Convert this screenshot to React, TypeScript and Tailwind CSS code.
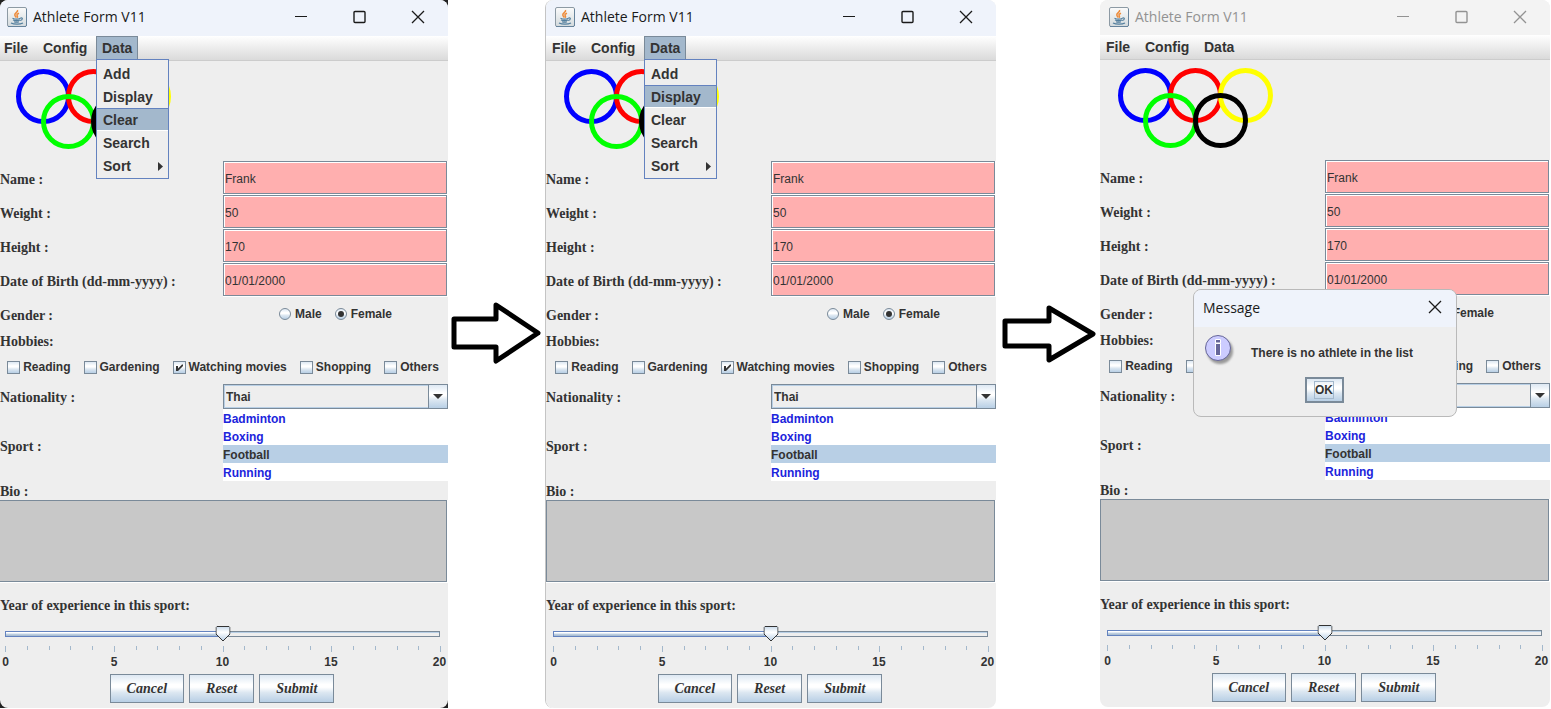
import { useId, useState, type ReactNode } from 'react';

const SANS = "font-['Liberation_Sans',Arial,sans-serif]";
const SERIF = "font-['Liberation_Serif','Times_New_Roman',serif]";
const LABEL = `${SERIF} text-[14px] leading-4 font-bold group-data-[edge=true]/form:pl-[2px]`;
const METAL = 'bg-[linear-gradient(#dde8f3,#ffffff_35%,#ffffff_45%,#dce7f1_65%,#b8cfe5)]';

function JavaIcon() {
  return (
    <svg width="20" height="20" viewBox="0 0 20 20" aria-hidden="true">
      <defs>
        <linearGradient id="cup-tile" x1="0" y1="0" x2="0" y2="1">
          <stop offset="0" stopColor="#fbfbfb" />
          <stop offset="1" stopColor="#d3dadd" />
        </linearGradient>
      </defs>
      <rect x="0.5" y="0.5" width="19" height="19" rx="1.5" fill="url(#cup-tile)" stroke="#8d9aa4" />
      <path d="M1 19.500h18M19.500 2v17" stroke="#66839c" />
      <path d="M10.500 3c1 2-3 3-2.700 5 .1 1 1 1.500 1.200 2.500M12 6.200c-2 .8-2.500 1.500-1.700 2.600.5.8.3 1.300-.3 1.900" fill="none" stroke="#ee8b3a" strokeWidth="1.500" />
      <path d="M5.500 11.200c2 .9 6 .9 8 0M6 13c2 .8 5 .8 7 0M7 14.700c1.500.6 3.500.6 5 0M13.500 11c2.500-.6 2.500 2-.3 2.500M4 16c3 1.600 9 1.600 12 0" fill="none" stroke="#537f9e" strokeWidth="1.200" />
    </svg>
  );
}

function CloseIcon() {
  return (
    <svg width="14" height="14" viewBox="0 0 14 14" stroke="currentColor" strokeWidth="1.300" aria-hidden="true">
      <path d="M1 1l12 12M13 1L1 13" />
    </svg>
  );
}

function TitleBar({ inactive }: { inactive: boolean }) {
  return (
    <header
      className={`flex items-center justify-between pl-[9px] pr-[23px] ${inactive ? 'h-[35px] bg-[#f3f3f3] text-[#929292]' : 'h-9 bg-[#eff3fb] text-[#1a1a1a]'}`}
    >
      <div className="flex items-center gap-[6px] pb-[2px]">
        <JavaIcon />
        <h1 className="font-['Open_Sans',sans-serif] text-[14px] leading-5">Athlete Form V11</h1>
      </div>
      <div className="flex items-center gap-[45px] pb-[2px]">
        <button type="button" aria-label="Minimize">
          <svg width="13" height="14" viewBox="0 0 13 14" stroke="currentColor" aria-hidden="true">
            <path d="M0 6.500h12" />
          </svg>
        </button>
        <button type="button" aria-label="Maximize">
          <svg width="13" height="14" viewBox="0 0 13 14" fill="none" stroke="currentColor" strokeWidth="1.400" aria-hidden="true">
            <rect x="1" y="1.500" width="11" height="11" rx="1" />
          </svg>
        </button>
        <button type="button" aria-label="Close">
          <CloseIcon />
        </button>
      </div>
    </header>
  );
}

const MENU_ITEMS = ['Add', 'Display', 'Clear', 'Search', 'Sort'];

function MenuBar({ highlighted }: { highlighted?: string }) {
  const open = highlighted !== undefined;
  return (
    <nav className="flex h-[25px] items-stretch border-b border-[#cccccc] bg-[linear-gradient(#ffffff,#dadada)] text-[14px] leading-[23px] font-bold text-[#333333]">
      <button type="button" className="w-[39px] pl-[6px] text-left">File</button>
      <button type="button" className="w-[59px] pl-[6px] text-left">Config</button>
      <div className="relative">
        <button
          type="button"
          aria-expanded={open}
          className={`h-6 w-[42px] border pl-[5px] text-left leading-[22px] ${open ? 'border-[#7a8a99] bg-[#a3b8cc]' : 'border-transparent'}`}
        >
          Data
        </button>
        {open && (
          <ul className="absolute top-[23px] left-0 z-10 w-[73px] border border-[#6382bf] bg-[#eeeeee] pt-[2px] pb-px">
            {MENU_ITEMS.map((item) => (
              <li key={item}>
                <button
                  type="button"
                  className={`flex h-[23px] w-full items-center justify-between border-y pt-px pr-[5px] pl-[6px] ${item === highlighted ? 'border-t-[#6382bf] border-b-white bg-[#a3b8cc]' : 'border-transparent'}`}
                >
                  {item}
                  {item === 'Sort' && (
                    <svg width="5" height="9" viewBox="0 0 5 9" aria-hidden="true">
                      <path d="M0 0l5 4.500L0 9z" fill="#333333" />
                    </svg>
                  )}
                </button>
              </li>
            ))}
          </ul>
        )}
      </div>
    </nav>
  );
}

function Rings() {
  return (
    <svg width="200" height="100" viewBox="0 0 200 100" fill="none" strokeWidth="5" aria-label="Olympic rings">
      <circle cx="45.5" cy="35.5" r="25" stroke="#0000ff" />
      <circle cx="95.5" cy="35.5" r="25" stroke="#ff0000" />
      <circle cx="145.5" cy="35.5" r="25" stroke="#ffff00" />
      <circle cx="70.5" cy="60.5" r="25" stroke="#00ff00" />
      <circle cx="120.5" cy="60.5" r="25" stroke="#000000" />
    </svg>
  );
}

function Row({ label, htmlFor, className, children }: { label: string; htmlFor?: string; className: string; children: ReactNode }) {
  return (
    <div className={`grid grid-cols-2 items-center ${className}`}>
      <label htmlFor={htmlFor} className={`${LABEL} pt-[3px] whitespace-nowrap`}>
        {label}
      </label>
      {children}
    </div>
  );
}

const FIELDS = [
  ['Name :', 'Frank'],
  ['Weight :', '50'],
  ['Height :', '170'],
  ['Date of Birth (dd-mm-yyyy) :', '01/01/2000'],
];
const HOBBIES = ['Reading', 'Gardening', 'Watching movies', 'Shopping', 'Others'];
const SPORTS = ['Badminton', 'Boxing', 'Football', 'Running'];

function Hobby({ name }: { name: string }) {
  const [checked, setChecked] = useState(name === 'Watching movies');
  return (
    <label className="flex items-center gap-[3px]">
      <span className="relative flex">
        <input
          type="checkbox"
          checked={checked}
          onChange={() => setChecked(!checked)}
          className={`size-[13px] appearance-none border border-[#7a8a99] ${METAL}`}
        />
        {checked && (
          <svg className="pointer-events-none absolute inset-0" width="13" height="13" viewBox="0 0 13 13" aria-hidden="true">
            <path d="M3 5h2v2.500L9 3.500h1V5L5 10H3z" fill="#333333" />
          </svg>
        )}
      </span>
      {name}
    </label>
  );
}

function Slider({ id }: { id: string }) {
  const [years, setYears] = useState(10);
  const share = `${(years / 20) * 100}%`;
  return (
    <div className="mt-3 pr-2 pl-[7px]">
      <div className="relative flex h-4 items-center">
        <div className="h-[6px] w-full border border-[#7a8a99] bg-[linear-gradient(#b8cfe5_1px,#eeeeee_1px)]">
          <div className="-mt-px -ml-px h-[6px] border border-[#6382bf] bg-[linear-gradient(#ffffff_1px,#c3d4e6_2px,#a3b8cc)]" style={{ width: share }} />
        </div>
        <input
          id={id}
          type="range"
          min="0"
          max="20"
          value={years}
          onChange={(e) => setYears(Number(e.target.value))}
          className="absolute inset-0 w-full opacity-0"
        />
        <svg className="pointer-events-none absolute top-0 -translate-x-1/2" style={{ left: share }} width="15" height="16" viewBox="0 0 15 16" aria-hidden="true">
          <defs>
            <linearGradient id={`${id}-thumb`} x1="0" y1="0" x2="0" y2="1">
              <stop offset="0" stopColor="#c8daeb" />
              <stop offset="0.400" stopColor="#ffffff" />
              <stop offset="1" stopColor="#b8cfe5" />
            </linearGradient>
          </defs>
          <path d="M1.500.5h12l1 1v6.500l-7 7-7-7V1.500z" fill={`url(#${id}-thumb)`} stroke="#333333" />
        </svg>
      </div>
      <div className="mt-1 -mr-px flex h-[6px] justify-between">
        {Array.from({ length: 21 }, (_, i) => (
          <span key={i} className={`w-px bg-[#a3b8cc] ${i % 5 === 0 ? 'h-[6px]' : 'h-1'}`} />
        ))}
      </div>
      <div className="mt-[2px] flex justify-between font-bold">
        {[0, 5, 10, 15, 20].map((n) => (
          <span key={n} className="flex w-px justify-center">{n}</span>
        ))}
      </div>
    </div>
  );
}

function AthleteForm() {
  const id = useId();
  return (
    <form className="text-[12px] leading-4 text-[#333333]" onSubmit={(e) => e.preventDefault()}>
      <Rings />
      {FIELDS.map(([label, value], i) => (
        <Row key={label} label={label} htmlFor={`${id}-f${i}`} className="h-[34px]">
          <div className="border-r border-b border-white">
            <input
              id={`${id}-f${i}`}
              type="text"
              defaultValue={value}
              className="block h-[33px] w-full border border-[#7a8a99] bg-[#ffafaf] pt-[3px] pl-px shadow-[inset_1px_1px_0_#ffffff] outline-none"
            />
          </div>
        </Row>
      ))}
      <Row label="Gender :" className="h-[34px]">
        <div className="flex items-center justify-center gap-[13px] font-bold">
          {['Male', 'Female'].map((g) => (
            <label key={g} className="flex items-center gap-1">
              <span className="relative flex">
                <input
                  type="radio"
                  name={`${id}-gender`}
                  defaultChecked={g === 'Female'}
                  className={`peer size-3 appearance-none rounded-full border border-[#7a8a99] ${METAL}`}
                />
                <span className="pointer-events-none absolute inset-[3px] hidden rounded-full bg-[#333333] peer-checked:block" />
              </span>
              {g}
            </label>
          ))}
        </div>
      </Row>
      <fieldset className="min-w-0">
        <legend className={`${LABEL} pt-[3px]`}>Hobbies:</legend>
        <div className="flex items-center justify-center gap-[13px] pt-[9px] pb-[9px] font-bold whitespace-nowrap">
          {HOBBIES.map((h) => (
            <Hobby key={h} name={h} />
          ))}
        </div>
      </fieldset>
      <Row label="Nationality :" htmlFor={`${id}-nat`} className="h-[25px]">
        <div className="relative">
          <select
            id={`${id}-nat`}
            className="block h-[25px] w-full appearance-none border border-[#7a8a99] bg-[#eeeeee] pl-[2px] font-bold shadow-[inset_0_0_0_1px_#b8cfe5] outline-none"
          >
            <option>Thai</option>
          </select>
          <span className={`pointer-events-none absolute inset-y-0 right-0 flex w-5 items-center justify-center border border-[#7a8a99] ${METAL}`}>
            <svg width="10" height="5" viewBox="0 0 10 5" aria-hidden="true">
              <path d="M0 0h10L5 5z" fill="#333333" />
            </svg>
          </span>
        </div>
      </Row>
      <Row label="Sport :" className="h-[72px]">
        <ul role="listbox" aria-label="Sport" className="bg-white font-bold text-[#1c24dc]">
          {SPORTS.map((s) => (
            <li
              key={s}
              role="option"
              aria-selected={s === 'Football'}
              className={`h-[18px] pt-[2px] ${s === 'Football' ? 'bg-[#b8cfe5] text-[#333333]' : ''}`}
            >
              {s}
            </li>
          ))}
        </ul>
      </Row>
      <label htmlFor={`${id}-bio`} className={`${LABEL} block pt-[3px]`}>
        Bio :
      </label>
      <div className="border-r border-b border-white">
        <textarea id={`${id}-bio`} className="block h-[82px] w-full resize-none border border-[#7a8a99] bg-[#c8c8c8] outline-none" />
      </div>
      <label htmlFor={`${id}-years`} className={`${LABEL} block pt-[15px]`}>
        Year of experience in this sport:
      </label>
      <Slider id={`${id}-years`} />
      <div className={`${SERIF} flex justify-center gap-[5px] pt-1 pr-[2px] pb-[5px] text-[14px] font-bold italic`}>
        {['Cancel', 'Reset', 'Submit'].map((b) => (
          <button key={b} type="button" className={`h-[29px] border border-[#7a8a99] px-4 pt-px ${METAL}`}>
            {b}
          </button>
        ))}
      </div>
    </form>
  );
}

function MessageDialog() {
  return (
    <div
      role="dialog"
      aria-label="Message"
      className="absolute top-[289px] left-[93px] z-20 h-[128px] w-[264px] overflow-hidden rounded-lg border border-[#b9b9b9] bg-[#eeeeee] text-[#333333]"
    >
      <div className="flex h-[37px] items-center justify-between bg-[#eff3fb] pr-[14px] pb-[3px] pl-[9px] text-[#1a1a1a]">
        <h2 className="font-['Open_Sans',sans-serif] text-[14px]">Message</h2>
        <button type="button" aria-label="Close message">
          <CloseIcon />
        </button>
      </div>
      <div className="flex items-center gap-[15px] pt-[7px] pl-[10px]">
        <svg width="32" height="32" viewBox="0 0 32 32" aria-hidden="true">
          <defs>
            <filter id="soft-shadow">
              <feGaussianBlur stdDeviation="1.200" />
            </filter>
          </defs>
          <circle cx="16" cy="17" r="13" fill="#9a9a9a" filter="url(#soft-shadow)" />
          <circle cx="14" cy="14" r="12.500" fill="#ccccff" stroke="#666699" />
          <path d="M11.500 5.500h5v3.500h-5zM11.500 9.500h5v12h-5z" fill="#666699" stroke="#ffffff" />
        </svg>
        <p className="pt-[5px] text-[12px] leading-4 font-bold">There is no athlete in the list</p>
      </div>
      <div className="flex justify-center pt-[11px] pr-[2px]">
        <button type="button" className={`flex h-[26px] w-[39px] items-center justify-center border-2 border-[#7a8a99] text-[12px] leading-4 font-bold ${METAL}`}>
          <span className="border border-[#a3b8cc]">OK</span>
        </button>
      </div>
    </div>
  );
}

type WindowProps = { highlighted?: string; dialog?: boolean; edge?: boolean; className?: string };

function FormWindow({ highlighted, dialog = false, edge = false, className = '' }: WindowProps) {
  return (
    <section className={`relative ${className}`}>
      <div className="overflow-hidden rounded-lg bg-[#eeeeee]">
        <div data-edge={edge} className={`group/form ${edge ? '-ml-[2px]' : ''}`}>
          <TitleBar inactive={dialog} />
          <MenuBar highlighted={highlighted} />
          <AthleteForm />
        </div>
      </div>
      {dialog && <MessageDialog />}
    </section>
  );
}

function Arrow({ slim = false }: { slim?: boolean }) {
  const outline = slim ? 'M4 16h44V3l44 26-44 26V41H4z' : 'M5 17h42V3l42 28-42 28V45H5z';
  return (
    <svg width="95" height="64" viewBox="0 0 95 64" aria-hidden="true">
      <path d={outline} fill="#ffffff" stroke="#000000" strokeWidth="5" strokeLinejoin="round" />
    </svg>
  );
}

export default function App() {
  return (
    <main
      className={`${SANS} grid min-h-screen grid-cols-[minmax(0,448fr)_minmax(0,97fr)_minmax(0,451fr)_minmax(0,104fr)_minmax(0,451fr)] items-start bg-white`}
    >
      <FormWindow highlighted="Clear" edge className="bg-[#222222]" />
      <div className="flex justify-center pt-[302px]">
        <Arrow />
      </div>
      <FormWindow highlighted="Display" className="rounded-lg border-l border-[#c4c4c4]" />
      <div className="flex justify-center pt-[305px]">
        <Arrow slim />
      </div>
      <FormWindow dialog className="pr-px" />
    </main>
  );
}
